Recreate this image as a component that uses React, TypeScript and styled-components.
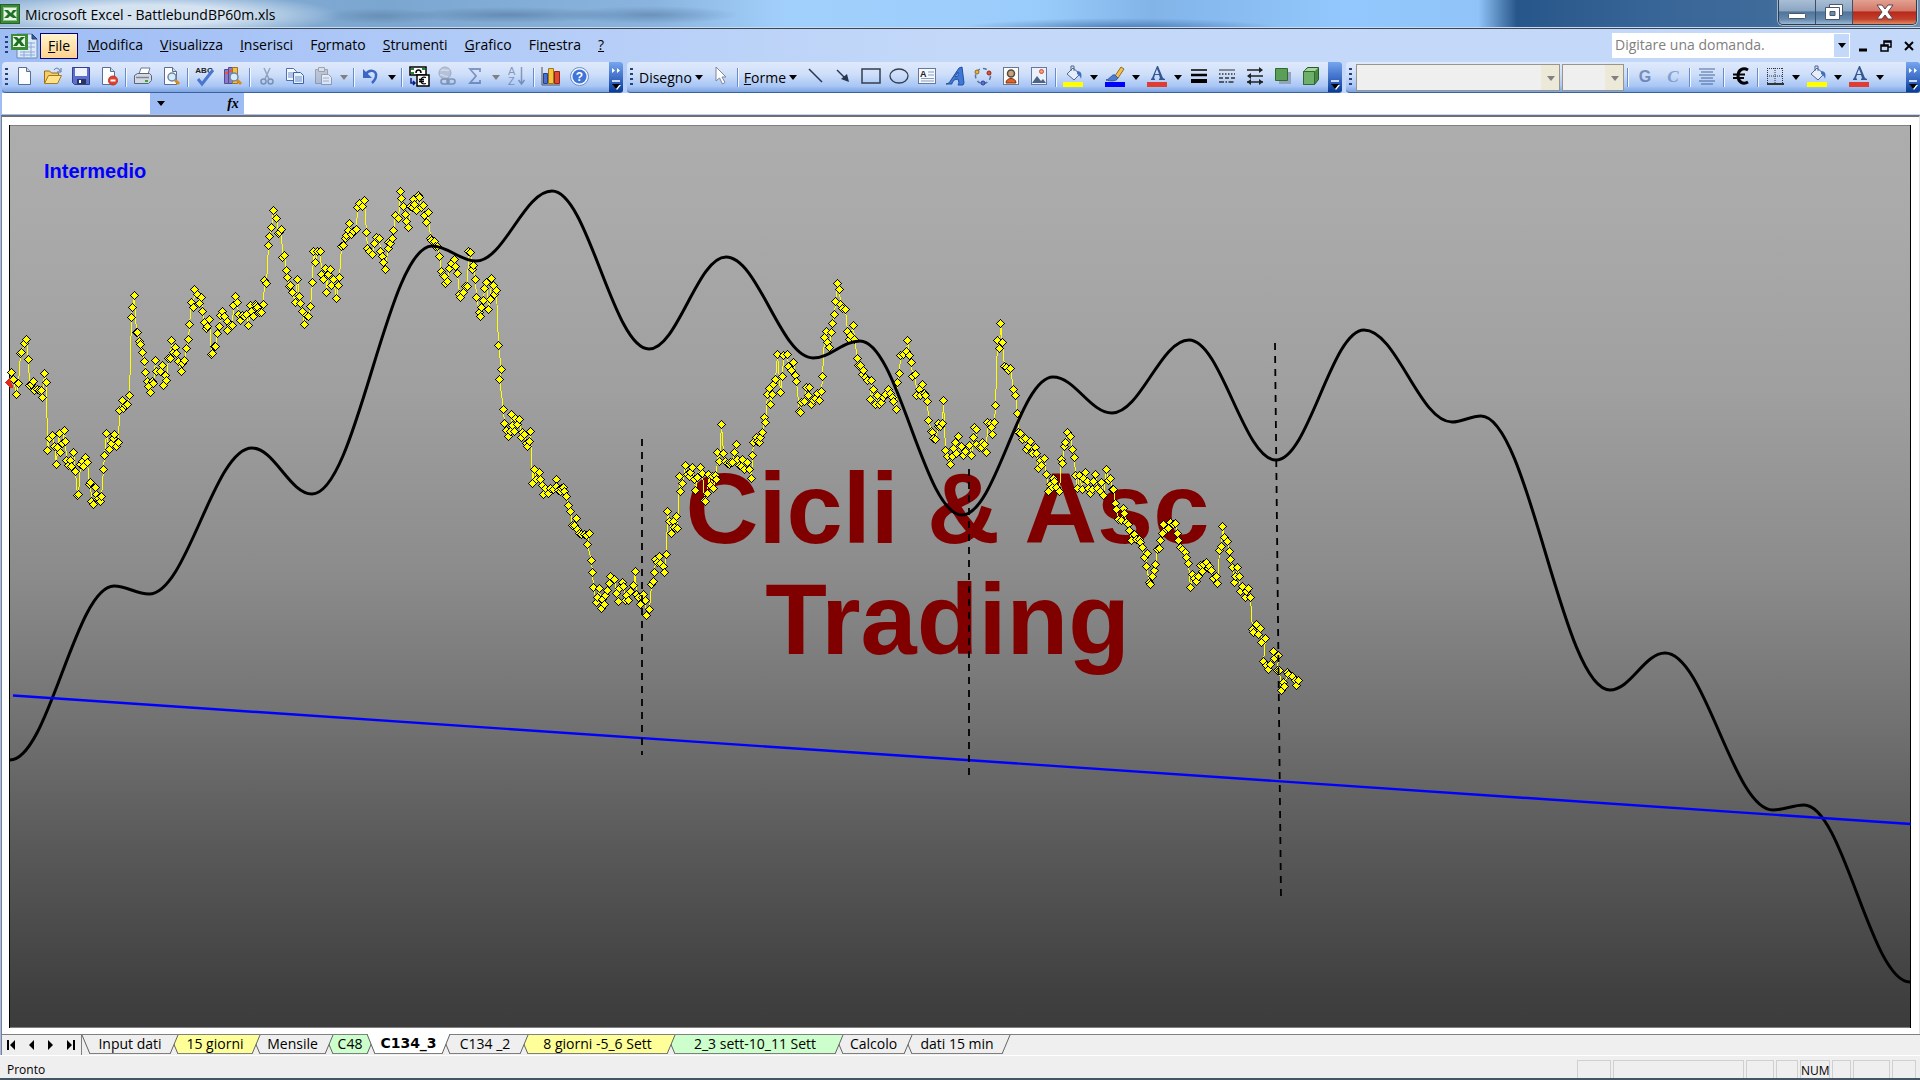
import React from "react";
import styled, { createGlobalStyle, css } from "styled-components";

const GlobalStyle = createGlobalStyle`
  *, *::before, *::after { box-sizing: border-box; }
  body { margin: 0; background: #a3c0f5; }
  button, input, select { font: inherit; color: inherit; margin: 0; padding: 0; border: 0; background: none; border-radius: 0; }
  svg { display: block; overflow: visible; }
`;

const uiFont = '"Open Sans", "Noto Sans", sans-serif';

/* ---------- window frame ---------- */

const Window = styled.div`
  display: flex;
  flex-direction: column;
  min-height: 100vh;
  font-family: ${uiFont};
  font-size: 14px;
  color: #000;
  background: linear-gradient(90deg, #9fbdf5, #c4d9f9 50%);
`;

const TitleBar = styled.header`
  display: flex;
  align-items: flex-start;
  height: 29px;
  padding-right: 3px;
  border-bottom: 1px solid #3b4654;
  box-shadow: inset 0 -1px 0 #c9dcee;
  background:
    radial-gradient(ellipse 190px 22px at 150px 15px, rgba(226, 236, 246, 0.85) 45%, rgba(226, 236, 246, 0) 100%),
    radial-gradient(ellipse 60px 8px at 380px 16px, rgba(70, 100, 130, 0.35), transparent),
    radial-gradient(ellipse 110px 8px at 510px 15px, rgba(60, 90, 125, 0.4), transparent),
    radial-gradient(ellipse 90px 9px at 650px 15px, rgba(60, 95, 135, 0.4), transparent),
    radial-gradient(ellipse 160px 10px at 1120px 28px, rgba(50, 100, 160, 0.7), transparent),
    linear-gradient(90deg, #8fb2d6 0, #7ba6d0 20%, #8ab4de 34%, #a2d0fc 41%, #9accfb 54%, #82b4e8 60%, #92c8fd 70%, #90c4f8 77%, #27568a 79%, #386597 86%, #3f6b9b 92%, #6f8fb0 100%);
`;

const Title = styled.h1`
  display: flex;
  align-items: center;
  gap: 5px;
  flex: 1;
  height: 28px;
  margin: 0;
  font-size: 14px;
  font-weight: 400;
`;

const Captions = styled.div`
  display: flex;
  height: 25px;
  border: 1px solid #2c3d50;
  border-top: 0;
  border-radius: 0 0 5px 5px;
  overflow: hidden;
  box-shadow: 0 0 0 1px rgba(255, 255, 255, 0.5);
`;

const CaptionButton = styled.button<{ $close?: boolean }>`
  display: grid;
  place-items: center;
  width: ${(p) => (p.$close ? 63 : 37)}px;
  border-right: ${(p) => (p.$close ? 0 : 1)}px solid #3c4f66;
  background: ${(p) =>
    p.$close
      ? "linear-gradient(#e3a090, #d2786a 45%, #b9281a 50%, #c2402c 80%, #e08a60)"
      : "linear-gradient(#a9bed4, #8ba6c3 45%, #50749b 50%, #6688ac 80%, #9bb8d4)"};
`;

const MenuBar = styled.nav`
  display: flex;
  align-items: center;
  gap: 1px;
  height: 33px;
  padding: 0 0 0 5px;
`;

const Grip = styled.span`
  width: 3px;
  height: 19px;
  flex: none;
  background: repeating-linear-gradient(#27417a 0 2px, transparent 2px 5px);
`;

const DocButton = styled.button`
  width: 30px;
  display: grid;
  place-items: center;
`;

const MenuItem = styled.button<{ $active?: boolean }>`
  height: 26px;
  padding: 0 8px 2px;
  ${(p) =>
    p.$active &&
    css`
      padding: 0 7px 1px;
      border: 1px solid #000080;
      background: linear-gradient(#fff4cc, #ffd28f);
    `}
`;

const Spacer = styled.span`
  flex: 1;
`;

const AskBox = styled.label`
  display: flex;
  width: 238px;
  height: 25px;
  background: #fff;
  border: 1px solid #fff;
  input {
    flex: 1;
    min-width: 0;
    padding: 0 2px 2px;
    outline: none;
  }
  input::placeholder { color: #808080; opacity: 1; }
`;

const AskArrow = styled.button`
  display: grid;
  place-items: center;
  width: 15px;
  background: #c4d9f9;
`;

const DocControls = styled.div`
  display: flex;
  button {
    display: grid;
    place-items: center;
    width: 23px;
    height: 24px;
  }
`;

/* ---------- toolbars ---------- */

const ToolbarRow = styled.div`
  display: flex;
  gap: 4px;
  height: 31px;
  padding-left: 2px;
`;

const Toolbar = styled.div<{ $basis?: number }>`
  display: flex;
  align-items: center;
  flex: ${(p) => (p.$basis ? `0 1 ${p.$basis}px` : "1 1 0")};
  min-width: 0;
  height: 31px;
  padding-left: 3px;
  overflow: hidden;
  border-bottom: 1px solid #3b619c;
  border-radius: 4px 3px 3px 4px;
  background: linear-gradient(#dfe9fb, #cfdff9 40%, #a9c6f5 80%, #7ba4e0);
  > ${Grip} { margin-right: 3px; }
`;

const Tool = styled.button<{ $dim?: boolean }>`
  display: grid;
  place-items: center;
  flex: 0 0 28px;
  height: 28px;
  padding-bottom: 2px;
  opacity: ${(p) => (p.$dim ? 0.5 : 1)};
`;

const ToolText = styled.button`
  display: flex;
  align-items: center;
  justify-content: center;
  gap: 3px;
  height: 28px;
  padding: 0 4px 0 3px;
  white-space: nowrap;
`;

const DropButton = styled.button`
  display: grid;
  place-items: center;
  flex: 0 0 14px;
  height: 28px;
`;

const Divider = styled.span`
  flex: 0 0 2px;
  height: 19px;
  margin: 0 2px;
  background: linear-gradient(90deg, #6a8ccb 50%, #f1f9ff 50%);
`;

const Overflow = styled.button`
  display: flex;
  flex-direction: column;
  align-items: center;
  justify-content: space-between;
  flex: 0 0 14px;
  height: 31px;
  margin-left: auto;
  padding: 6px 0 3px;
  background: linear-gradient(#76a6ee, #3f6fc8 50%, #053995);
`;

const ComboFrame = styled.label<{ $w: number }>`
  position: relative;
  display: flex;
  width: ${(p) => p.$w}px;
  height: 27px;
  margin: 0 1px;
  border: 1px solid #98968a;
  background: linear-gradient(90deg, #efefef calc(100% - 18px), #ece9d8 0);
  select { appearance: none; width: 100%; opacity: 1; }
  svg { position: absolute; right: 4px; top: 11px; pointer-events: none; }
`;

const FormulaRow = styled.div`
  display: flex;
  height: 22px;
  padding: 0 0 1px 2px;
  input { background: #fff; outline: none; height: 21px; }
`;

const NameBox = styled.input`
  width: 148px;
`;

const FormulaTools = styled.div`
  display: flex;
  align-items: center;
  justify-content: space-between;
  width: 94px;
  padding: 0 2px 0 4px;
  background: #9ebcf4;
`;

const FunctionButton = styled.button`
  width: 18px;
  font: italic 700 14px/18px "Liberation Serif", serif;
`;

const FormulaInput = styled.input`
  flex: 1;
`;

/* ---------- chart sheet ---------- */

const Sheet = styled.main`
  display: flex;
  flex: 1;
  padding: 8px 8px 6px 7px;
  margin-left: 1px;
  background: #fff;
  border-top: 2px solid #6f6f6f;
  border-left: 1px solid #808080;
  border-right: 1px solid #e4e4e4;
`;

const Plot = styled.section`
  display: grid;
  flex: 1;
  background: linear-gradient(#adadad, #aaa 10%, #9f9f9f 30%, #8b8b8b 50%, #727272 66%, #595959 80%, #404040 96%, #3c3c3c);
  > * { grid-area: 1 / 1; min-width: 0; min-height: 0; }
`;

const ChartTitle = styled.h2`
  margin: 0;
  padding: 35px;
  font: 700 20px/22px "Liberation Sans", Arial, sans-serif;
  color: #0000ff;
`;

const Watermark = styled.p`
  align-self: center;
  margin: 0;
  padding: 0 25px 26px 0;
  text-align: center;
  font: 700 101px/111px "Liberation Sans", Arial, sans-serif;
  color: #800000;
`;

const Graph = styled.svg`
  width: 100%;
  height: 100%;
  overflow: visible;
`;

const turningPoints: [number, number][] = [
  [10, 760], [114, 586], [149, 594], [252, 448], [312, 494], [432, 246], [476, 261], [552, 191],
  [649, 349], [726, 257], [813, 358], [860, 341], [962, 515], [1053, 377], [1112, 413],
  [1189, 340], [1276, 460], [1364, 330], [1452, 422], [1481, 416], [1610, 690],
  [1665, 653], [1773, 810], [1804, 805], [1910, 982],
];

const cyclePath = turningPoints
  .map(([x, y], i) => {
    if (i === 0) return `M${x} ${y}`;
    const [px, py] = turningPoints[i - 1];
    const k = (x - px) * 0.37;
    return `C${px + k} ${py} ${x - k} ${y} ${x} ${y}`;
  })
  .join("");

/* Hourly closes, three blocks; each pair is in thirds of a chart unit from the block's origin. */
const blocks: { x: number; y: number; data: string }[] = [
  {
    x: 0,
    y: 180,
    data:
      "34,577 40,597 50,643 56,610 62,520 65,516 72,490 80,479 86,538 88,615 94,612 101,604 103,630 112,628 118,630 125,631 127,653 134,580 140,607 142,811 148,775 157,767 162,799 169,853 171,803 178,761 182,817 187,790 194,751 197,784 200,841 206,855 211,841 215,860 221,817 226,874 232,946 235,943 241,852 247,843 251,858 256,831 263,848 268,912 271,908 275,965 280,973 286,922 289,943 295,955 301,965 305,949 311,868 313,826 319,760 328,808 334,789 340,775 344,764 350,798 355,788 358,691 367,661 370,684 376,677 382,673 388,647 394,412 397,382 403,346 409,458 412,458 418,485 422,493 428,517 434,544 436,577 441,604 446,620 452,637 457,604 460,611 466,541 470,573 480,573 488,556 491,616 496,587 500,601 506,535 511,536 514,481 520,518 526,503 530,520 536,543 544,574 548,549 553,541 559,505 565,478 569,433 574,368 580,382 583,328 592,342 598,370 604,352 607,394 613,428 620,445 623,439 628,419 634,523 637,519 643,500 647,499 652,461 658,439 661,405 667,393 674,410 682,425 683,452 690,437 697,436 700,376 706,349 712,368 715,404 721,420 727,405 733,410 740,403 745,436 751,377 754,394 760,410 767,374 770,376 773,383 778,398 784,398 790,373 793,301 799,310 805,196 808,169 814,142 820,91 829,116 835,160 838,158 845,149 847,233 853,227 859,271 862,293 868,318 872,317 877,337 886,368 892,298 898,349 901,370 907,395 913,432 919,405 925,410 931,380 937,308 940,214 946,247 952,214 961,214 964,283 970,298 975,265 980,338 985,284 992,268 994,317 1000,298 1009,355 1015,317 1019,292 1024,199 1030,196 1036,175 1038,167 1044,150 1048,130 1054,164 1060,155 1069,149 1071,83 1078,70 1087,80 1093,61 1099,157 1102,205 1108,215 1117,223 1123,191 1128,171 1138,175 1141,214 1147,229 1150,247 1156,269 1164,187 1165,205 1171,190 1177,175 1180,151 1187,106 1195,116 1201,34 1204,55 1210,79 1216,103 1219,124 1226,143 1230,80 1237,83 1240,58 1243,74 1249,92 1255,45 1259,53 1264,83 1271,76 1274,107 1280,128 1286,97 1290,175 1295,180 1303,184 1306,200 1313,200 1318,229 1324,275 1330,287 1333,290 1337,309 1342,304 1348,265 1354,250 1363,238 1366,260 1373,280 1378,342 1382,353 1390,338 1396,320 1402,320 1405,214 1411,217 1417,268 1420,256 1426,298 1429,352 1438,397 1441,410 1444,382 1450,362 1454,325 1459,308 1465,389 1471,358 1474,295 1480,316 1483,344 1489,331",
  },
  {
    x: 480,
    y: 230,
    data:
      "55,346 64,418 58,448 70,538 73,580 79,602 84,620 90,605 94,553 98,587 103,604 107,564 112,583 118,568 124,622 128,608 134,612 140,640 142,649 148,634 151,604 157,760 163,718 169,748 178,727 182,748 187,766 190,794 197,775 205,789 211,775 219,779 229,748 230,770 235,780 241,785 244,775 251,772 252,784 259,799 265,826 271,844 277,887 283,886 289,865 292,898 298,910 305,914 313,914 319,917 328,910 322,943 334,991 337,1027 341,1072 348,1118 352,1103 358,1075 364,1134 368,1108 374,1124 377,1097 382,1081 388,1060 392,1039 403,1048 409,1090 415,1114 419,1076 428,1056 431,1069 437,1110 439,1096 445,1111 451,1084 460,1065 466,1024 469,1093 475,1103 481,1123 486,1103 490,1093 496,1111 499,1155 509,1139 514,1063 520,1054 523,1027 527,988 532,997 538,979 541,1000 550,1009 553,1027 559,973 562,844 568,874 574,911 580,874 583,892 590,859 593,895 597,740 601,784 607,761 616,706 622,733 628,740 631,727 638,713 643,748 647,782 653,743 661,712 667,730 673,810 677,815 683,791 685,733 691,767 697,740 701,775 707,737 710,748 713,667 719,694 725,583 730,670 737,694 742,700 748,702 752,697 758,698 764,667 770,643 772,689 778,707 785,709 788,688 793,718 802,698 808,719 814,745 818,676 821,637 828,622 832,634 838,637 841,622 847,607 853,562 856,577 862,493 868,475 871,523 877,493 880,463 886,449 892,374 901,487 907,439 911,376 922,373 926,409 934,421 941,397 946,436 950,454 958,544 961,547 965,516 973,515 979,472 988,472 985,496 994,524 1000,511 1006,505 1012,490 1018,511 1024,484 1027,439 1033,322 1039,304 1043,337 1048,352 1054,307 1058,281 1063,253 1066,214 1072,160 1078,179 1081,223 1088,235 1097,238 1102,304 1108,328 1111,317 1120,286 1124,327 1132,385 1135,406 1141,407 1147,433 1150,421 1156,442 1162,450 1174,451 1171,509 1180,478 1186,524 1193,495 1198,524 1204,518 1210,503 1216,493 1225,478 1231,490 1237,502 1240,514 1249,538 1253,457 1258,430 1262,376 1271,373 1280,364 1283,331 1288,377 1294,397 1297,439 1306,434 1310,497 1319,479 1322,496 1328,463 1333,490 1337,496 1343,514 1345,571 1353,605 1357,608 1360,625 1367,629 1374,590 1376,580 1382,589 1388,580 1390,511 1397,661 1402,680 1411,704 1417,679 1420,655 1427,637 1436,619 1430,671 1443,649 1451,676 1457,664 1468,646 1474,676 1480,622 1484,592",
  },
  {
    x: 940,
    y: 270,
    data:
      "110,478 109,522 118,532 125,533 127,517 134,523 139,548 143,457 152,460 155,473 158,493 164,457 166,406 172,211 178,235 181,160 187,217 193,290 200,292 205,301 211,295 220,359 227,376 232,430 235,487 241,490 247,508 256,505 259,537 265,529 271,514 277,550 287,532 289,550 295,596 301,571 304,587 313,565 319,613 326,664 331,644 337,652 340,625 344,634 350,652 358,664 364,569 367,580 373,530 377,517 382,487 392,499 398,538 404,562 406,616 411,656 418,617 428,659 430,625 437,607 442,635 446,655 451,671 457,658 461,634 467,613 473,656 481,664 485,638 491,677 499,598 505,632 511,625 517,658 520,658 526,700 530,718 536,748 543,752 550,715 553,730 559,757 565,763 568,781 575,812 583,793 589,808 598,808 601,818 608,832 613,862 622,850 619,889 627,937 631,943 638,919 644,902 647,884 652,838 658,836 661,811 667,791 671,763 679,779 685,775 692,757 701,764 706,760 712,791 715,811 722,832 728,838 736,847 739,862 746,881 752,953 757,913 763,925 769,935 775,919 781,887 788,905 790,883 799,877 805,895 808,890 814,902 820,925 829,919 832,941 838,841 844,830 848,769 854,803 863,814 869,844 872,868 877,892 883,938 886,919 893,891 899,919 901,965 907,949 916,982 920,965 925,956 932,982 937,1078 940,1088 949,1063 955,1092 962,1075 965,1117 976,1106 970,1175 980,1187 985,1199 991,1184 1000,1144 1004,1165 1015,1156 1013,1201 1019,1202 1024,1262 1031,1238 1034,1249 1043,1207 1045,1213 1057,1219 1066,1231 1070,1247 1075,1231",
  },
];

const prices = blocks.flatMap((b) =>
  b.data.split(" ").map((pair) => {
    const [x, y] = pair.split(",").map(Number);
    return [Math.floor(b.x + x / 3) + 0.5, Math.floor(b.y + y / 3) + 0.5];
  })
);

const Chart = () => (
  <Graph viewBox="9 125 1902 903" preserveAspectRatio="none" role="img" aria-label="Intermedio">
    <rect x="9.5" y="125.5" width="1901" height="902" fill="none" stroke="#808080" />
    <path d="M9.5 125V1028M1910.5 125V1028" stroke="#000" />
    <g shapeRendering="crispEdges">
      <polyline points={prices.map((p) => p.join(",")).join(" ")} fill="none" stroke="#ffff00" />
      {prices.map(([x, y], i) => (
        <path key={i} d={`M${x - 4} ${y}l4-4l4 4l-4 4z`} fill="#ffff00" stroke="#000" />
      ))}
      <path d="M4.500 382.500l5-5l4 10l-3 1z" fill="#e02a1c" />
    </g>
    <path d={cyclePath} fill="none" stroke="#000" strokeWidth="3" />
    <path d="M13 695.5L1911 824" stroke="#0000ff" strokeWidth="2.4" />
    <path d="M642 439V755M969 469V779M1275 343L1281 898" stroke="#000" strokeWidth="1.8" strokeDasharray="7 6" />
  </Graph>
);

/* ---------- sheet tabs and status ---------- */

const TabStrip = styled.div`
  display: flex;
  height: 21px;
  margin-left: 1px;
  border-top: 1px solid #808080;
  border-left: 1px solid #808080;
  background: #efefef;
`;

const TabNav = styled.div`
  display: flex;
  width: 80px;
  padding-right: 1px;
  border-right: 1px solid #808080;
  button { flex: 1; display: grid; place-items: center; }
`;

const tabColors = { plain: "#efefef", yellow: "#ffff99", green: "#ccffcc", white: "#ffffff" };

const Tab = styled.button<{ $w: number; $z: number; $active?: boolean }>`
  position: relative;
  z-index: ${(p) => p.$z};
  display: flex;
  flex: 0 0 ${(p) => p.$w}px;
  height: ${(p) => (p.$active ? 20 : 19)}px;
  margin-right: -8px;
  margin-top: ${(p) => (p.$active ? -1 : 0)}px;
  ${(p) => p.$active && css`font-family: "DejaVu Sans", sans-serif; font-weight: 700;`}
`;

const TabLabel = styled.span<{ $fill: string }>`
  flex: 1;
  height: 100%;
  line-height: 18px;
  text-align: center;
  white-space: nowrap;
  background: ${(p) => p.$fill};
  border-bottom: 1px solid #808080;
`;

const StatusBar = styled.footer`
  display: flex;
  align-items: stretch;
  gap: 2px;
  height: 25px;
  padding: 4px 4px 0 7px;
  font-size: 12px;
  background: #efefef;
  border-top: 1px solid #fff;
  border-bottom: 2px solid #445566;
`;

const StatusText = styled.span`
  flex: 1;
  line-height: 20px;
`;

const StatusCell = styled.span<{ $w: number }>`
  width: ${(p) => p.$w}px;
  border: 1px solid #d0d0d0;
  border-bottom: 0;
  text-align: center;
  line-height: 20px;
`;

/* ---------- icons ---------- */

const Caret = ({ c = "#000", w = 8 }: { c?: string; w?: number }) => (
  <svg width={w} height={w / 2 + 1} viewBox="0 0 8 5"><path d="M0 0h8L4 5z" fill={c} /></svg>
);

const Svg = ({ children, s = 20 }: { children: React.ReactNode; s?: number }) => (
  <svg width={s} height={s} viewBox="0 0 20 20" fill="none" stroke="#44546e" strokeWidth="1">{children}</svg>
);

const pageD = "M3.500 1.500h8l4 4v13h-12z";
const Page = () => (<><path d={pageD} fill="#fdfeff" stroke="#5b6e91" /><path d="M11.500 1.500v4h4" fill="#c9d8ee" stroke="#5b6e91" /></>);
const Lens = () => (<><path d="M14 14l4 4" stroke="#d98a1e" strokeWidth="3" /><circle cx="11" cy="11" r="4" fill="#d5ecfb" stroke="#6f87a6" strokeWidth="1.500" /></>);

const ExcelMark = () => (
  <svg width="20" height="20" viewBox="0 0 20 20">
    <rect x="0.500" y="0.500" width="19" height="19" fill="#3a8a3a" stroke="#2b5f2d" />
    <rect x="3.500" y="3.500" width="13" height="13" fill="#e8f5e4" stroke="#8cc488" />
    <path d="M4 6h4l3 3 2-3h4l-4 4 4 4h-4l-3-2-2 2H4l4-4z" fill="#1f7328" />
  </svg>
);

const WorkbookIcon = () => (
  <svg width="27" height="26" viewBox="0 0 27 26">
    <path d="M6 1h15l5 5v19H6z" fill="#dce9fb" stroke="#6787ba" />
    <path d="M21 1v5h5z" fill="#3c5d94" stroke="#24406e" />
    <path d="M16 10h8M16 14h8M9 19h15M9 22h15M20 9v15M13 18v6" stroke="#8ba8d4" />
    <rect x="0" y="1" width="17" height="16" fill="#3c8c36" />
    <rect x="2" y="3" width="12" height="11" fill="#e9f5e5" />
    <path d="M2 4h4l2 2 2-2h4l-4 4 4 5h-4l-2-3-2 3H2l4-5z" fill="#1e6e26" />
  </svg>
);

const icons: Record<string, React.ReactNode> = {
  new: <Svg><Page /></Svg>,
  open: <Svg><path d="M1.500 17V5h5l2 2h7v4" fill="#f3cf6b" stroke="#9a6d16" /><path d="M1.500 17.500l4-8h13l-4 8z" fill="#ffe28a" stroke="#a87a1c" /><path d="M11 4c2-3 5-2 6 1M18 2v4h-4" stroke="#54709c" /></Svg>,
  save: <Svg><path d="M1.500 1.500h17v17h-15l-2-2z" fill="#5a6fd0" stroke="#35408e" /><path d="M4 2h12v8H4z" fill="#eef3fb" stroke="none" /><path d="M6 13h9v5H6z" fill="#2b3360" stroke="none" /><path d="M8 14h2v3H8z" fill="#fff" stroke="none" /></Svg>,
  permission: <Svg><Page /><circle cx="14" cy="14.500" r="4.500" fill="#e2402c" stroke="#b83a26" /><path d="M11.500 14.500h5" stroke="#fff" strokeWidth="2" /></Svg>,
  print: <Svg><path d="M6 8l2-6h9l-2 6" fill="#fff" stroke="#6d7b92" /><path d="M1.500 9.500l3-2h12l2 2v5l-3 3h-14z" fill="#d5d9e2" stroke="#59657b" /><path d="M3 11.500h13" stroke="#7d879a" strokeWidth="1.500" /><path d="M12 14h3v2h-3z" fill="#37a53a" stroke="none" /></Svg>,
  preview: <Svg><Page /><Lens /></Svg>,
  spell: <svg width="20" height="22" viewBox="0 0 20 22"><text x="9" y="8" textAnchor="middle" fontFamily="Liberation Sans" fontSize="8" fontWeight="700" fill="#222">ABC</text><path d="M3 14l4 5L18 5" fill="none" stroke="#4a76d0" strokeWidth="3" /></svg>,
  research: <Svg><path d="M1.500 3.500h4v14h-4zM5.500 1.500h4v16h-4z" fill="#8a7cc8" stroke="#544a94" /><path d="M9.500 1.500h5v16h-5z" fill="#f0c050" stroke="#a2731a" /><path d="M2 7h3M6 5h3" stroke="#e85a3a" strokeWidth="2" /><Lens /></Svg>,
  cut: <Svg><path d="M7 2l5 11M13 2L8 13" stroke="#5b6b86" strokeWidth="1.500" /><circle cx="6.500" cy="15.500" r="2.500" strokeWidth="1.500" /><circle cx="13.500" cy="15.500" r="2.500" strokeWidth="1.500" /></Svg>,
  copy: <Svg><path d="M1.500 2.500h7l3 3v9h-10z" fill="#f4f8ff" stroke="#4f6fae" /><path d="M3 7h5M3 9h5M3 11h5" stroke="#6f8fca" /><path d="M8.500 6.500h7l3 3v8h-10z" fill="#e8f0fd" stroke="#3d62a8" /><path d="M10 11h7M10 13h7M10 15h7" stroke="#6f8fca" /></Svg>,
  paste: <Svg><path d="M2.500 3.500h12v14h-12z" fill="#a9a9b6" stroke="#666" /><path d="M5.500 1.500h6v4h-6z" fill="#ddd" stroke="#666" /><path d="M8.500 8.500h7l3 3v7h-10z" fill="#fff" stroke="#666" /><path d="M10 12h6M10 15h6" stroke="#888" /></Svg>,
  undo: <Svg><path d="M5 8c3-5 11-4 10 2-0 3-2 5-4 7" stroke="#3b66c4" strokeWidth="2.500" /><path d="M2 3v9h9z" fill="#3b66c4" stroke="none" /></Svg>,
  euroconv: <svg width="21" height="21" viewBox="0 0 21 21"><path d="M1 1h16v8H1z" fill="#fff" stroke="#000" strokeWidth="1.500" /><path d="M2 3h3M13 3h3M2 7h3" stroke="#188a2c" strokeWidth="2" fill="none" /><path d="M7 7c0-4 5-4 5 0" fill="none" stroke="#000" strokeWidth="1.500" /><path d="M8 9h12v11H8z" fill="#fff" stroke="#000" strokeWidth="1.500" /><path d="M17 11.500c-3-1-5 0-5 3s2 4 5 3M10 13.500h5M10 15.500h5" fill="none" stroke="#000" strokeWidth="1.300" /><path d="M2 12v5h3M4 15l2 2-2 2" fill="none" stroke="#0b1e8a" strokeWidth="1.500" /></svg>,
  link: <Svg><circle cx="8" cy="7" r="6" fill="#9aa3b4" stroke="#6d7890" /><path d="M4 5c3-3 6 1 8-1M3 9c4-1 5 3 8 1" stroke="#cdd4e0" strokeWidth="1.500" /><rect x="4" y="13" width="8" height="5" rx="2.500" strokeWidth="1.500" /><rect x="10" y="13" width="8" height="5" rx="2.500" strokeWidth="1.500" /></Svg>,
  sum: <Svg><path d="M15 6V3H5l6 7-6 7h10v-3" stroke="#2c4e8f" strokeWidth="1.800" /></Svg>,
  sort: <svg width="20" height="22" viewBox="0 0 20 22"><text x="1" y="10" fontFamily="Liberation Sans" fontSize="11" fill="#38527f">A</text><text x="1" y="20" fontFamily="Liberation Sans" fontSize="11" fill="#38527f">Z</text><path d="M14.500 2v16M11.500 15l3 4 3-4" fill="none" stroke="#38527f" strokeWidth="1.500" /></svg>,
  chart: <Svg><path d="M1 1v18h18" stroke="#555" /><path d="M2.500 7.500h4v10h-4z" fill="#4a70d0" stroke="#283f8c" /><path d="M7.500 2.500h5v15h-5z" fill="#f5c63c" stroke="#a3751b" /><path d="M13.500 5.500h5v12h-5z" fill="#de4a32" stroke="#8f2415" /></Svg>,
  help: <svg width="19" height="19" viewBox="0 0 19 19"><circle cx="9.500" cy="9.500" r="9" fill="#f4f8ff" stroke="#6a8ccb" /><circle cx="9.500" cy="9.500" r="7" fill="#3f74d8" /><text x="9.500" y="14" textAnchor="middle" fontFamily="Liberation Sans" fontSize="12" fontWeight="700" fill="#fff">?</text></svg>,
  pointer: <Svg><path d="M5 1v14l3.500-3 3 6 2.500-1.500-3-5.500H15z" fill="#fff" stroke="#7a879c" /></Svg>,
  line: <Svg><path d="M4 3l13 13" stroke="#27364f" strokeWidth="1.500" /></Svg>,
  arrow: <Svg><path d="M4 4l8 8" stroke="#27364f" strokeWidth="1.500" /><path d="M16 16l-2-8-6 5z" fill="#27364f" stroke="none" /></Svg>,
  rect: <svg width="20" height="16" viewBox="0 0 20 16"><rect x="1" y="1" width="18" height="14" fill="none" stroke="#333e50" strokeWidth="1.500" /></svg>,
  oval: <svg width="20" height="16" viewBox="0 0 20 16"><ellipse cx="10" cy="8" rx="9" ry="7" fill="none" stroke="#333e50" strokeWidth="1.300" /></svg>,
  textbox: <Svg><rect x="1.500" y="2.500" width="17" height="15" fill="#f4f8ff" stroke="#66799c" /><text x="3" y="11" fontFamily="Liberation Sans" fontSize="9" fontWeight="700" fill="#222" stroke="none">A</text><path d="M11 6h6M11 9h6M4 12.500h13M4 15h13" stroke="#8a9bbb" /></Svg>,
  wordart: <Svg><path d="M1 18l3-1L14 2l3-1 2 16-1 2h-5l1-2-1-4-4 1-2 3v1zM10 11l3-1V6z" fill="#3f78d8" fillRule="evenodd" stroke="#24509c" /></Svg>,
  diagram: <Svg><circle cx="10" cy="10" r="7.500" stroke="#5b74a6" strokeWidth="1.500" strokeDasharray="4 3" /><circle cx="4" cy="6" r="2" fill="#e8b83c" stroke="#8d6b1c" /><circle cx="16" cy="7" r="2" fill="#de5138" stroke="#8f2c1a" /><circle cx="10" cy="17" r="2" fill="#5a6fd8" stroke="#303f92" /></Svg>,
  clip: <Svg><rect x="2.500" y="1.500" width="15" height="17" fill="#fdfcf6" stroke="#6b7690" /><path d="M5 17c0-6 10-6 10 0z" fill="#e2622b" stroke="#7a3010" /><circle cx="10" cy="7.500" r="3.500" fill="#c9a27a" stroke="#4a4a4a" strokeWidth="1.500" /></Svg>,
  picture: <Svg><rect x="2.500" y="1.500" width="15" height="17" fill="#e8f1fc" stroke="#66799c" /><circle cx="12.500" cy="5.500" r="2" fill="#f0a080" stroke="#d9482c" /><path d="M3 17l5-7 4 5 2-2 3 4z" fill="#4d6286" stroke="none" /></Svg>,
  lines: <Svg><path d="M2 4h16" stroke="#000" strokeWidth="1.500" /><path d="M2 9h16" stroke="#000" strokeWidth="2.500" /><path d="M2 15h16" stroke="#000" strokeWidth="4" /></Svg>,
  dashes: <Svg><path d="M2 4h16" stroke="#333" /><path d="M2 8h16" stroke="#333" strokeWidth="1.500" strokeDasharray="1.500 1.500" /><path d="M2 12h16" stroke="#333" strokeWidth="1.500" strokeDasharray="4 2" /><path d="M2 16h16" stroke="#333" strokeWidth="1.500" strokeDasharray="5 1.500 1.500 1.500" /></Svg>,
  arrows: <Svg><path d="M2 4h15M3 10h15M2 16h16" stroke="#222" strokeWidth="1.500" /><path d="M14 1l4 3-4 3zM6 7l-4 3 4 3zM6 13l-4 3 4 3zM14 13l4 3-4 3z" fill="#222" stroke="none" /></Svg>,
  shadow: <Svg><path d="M6 6h12v12H6z" fill="#93a3bd" stroke="none" /><path d="M2.500 2.500h12v12h-12z" fill="#5b9e57" stroke="#2e6a32" /></Svg>,
  cube: <Svg><path d="M2.500 5.500l4-4h11v12l-4 5h-11z" fill="#468a46" stroke="#245c2a" /><path d="M2.500 5.500h11v13h-11z" fill="#6eb06a" stroke="#2e6a32" /><path d="M3 5l4-3h10l-3 3z" fill="#a5d49c" stroke="none" /></Svg>,
  bold: <svg width="20" height="20" viewBox="0 0 20 20"><text x="10" y="16" textAnchor="middle" fontFamily="Liberation Sans" fontSize="16" fontWeight="700" fill="#20437f">G</text></svg>,
  italic: <svg width="20" height="20" viewBox="0 0 20 20"><text x="10" y="16" textAnchor="middle" fontFamily="Liberation Serif" fontSize="17" fontStyle="italic" fontWeight="700" fill="#3d66a8">C</text></svg>,
  align: <Svg><path d="M2 3h16M4 6h12M2 9h16M4 12h12M2 15h16M4 18h12" stroke="#20437f" strokeWidth="1.500" /></Svg>,
  euro: <Svg><path d="M17 4c-5-3-10 0-10 6s5 9 10 6" stroke="#000" strokeWidth="3" /><path d="M2 8.500h12M2 12h11" stroke="#000" strokeWidth="1.800" /></Svg>,
  borders: <Svg><path d="M2 2.500h16M2 10h16M2.500 2v15M10 2v15M17.500 2v15" stroke="#333" strokeDasharray="1 1" /><path d="M2 18h17" stroke="#333" strokeWidth="2" /></Svg>,
};

const Swatch = ({ kind, color }: { kind: "fill" | "brush" | "font"; color: string }) => (
  <svg width="20" height="22" viewBox="0 0 20 22">
    {kind === "fill" && (<><path d="M4 9l6-6 7 6-6 6z" fill="#e6eefb" stroke="#50668e" /><path d="M8 6V1h3v5" fill="none" stroke="#50668e" /><path d="M14 6c5 0 5 4 4 8-1-3-2-4-4-5z" fill="#3f6fc0" /></>)}
    {kind === "brush" && (<><path d="M10 11l6-9 3 2-6 9z" fill="#f4c14e" stroke="#8f6a20" /><path d="M1 15c5-1 5-6 9-5l3 3c-2 4-8 3-12 2z" fill="#4e7ccd" stroke="#35589e" /></>)}
    {kind === "font" && <path d="M4 15v-1l1-1L10 1h1l5 12 2 1v1h-6v-1l1-1-1-3H8l-1 3 1 1v1zM8 9h4l-2-5z" fill="#34578f" fillRule="evenodd" />}
    <rect x="0" y="17" width="20" height="5" fill={color} />
  </svg>
);

const Btn = ({ i, label, dim }: { i: string; label: string; dim?: boolean }) => (
  <Tool type="button" aria-label={label} $dim={dim}>{icons[i]}</Tool>
);

const Drop = ({ c, label }: { c?: string; label: string }) => (
  <DropButton type="button" aria-label={label}><Caret c={c} /></DropButton>
);

const More = ({ chevrons }: { chevrons?: boolean }) => (
  <Overflow type="button" aria-label="Opzioni barra degli strumenti">
    <svg width="8" height="5" viewBox="0 0 8 5">{chevrons && <path d="M0 0l3 2.500L0 5zM5 0l3 2.500L5 5z" fill="#fff" />}</svg>
    <svg width="10" height="10" viewBox="0 0 10 10"><path d="M1 1h8" stroke="#fff" strokeWidth="1.500" /><path d="M2 5h8L6 10z" fill="#fff" /><path d="M1 4h8L5 9z" fill="#000" /></svg>
  </Overflow>
);

const menus: [string, string, string][] = [
  ["", "F", "ile"], ["", "M", "odifica"], ["", "V", "isualizza"], ["", "I", "nserisci"], ["F", "o", "rmato"],
  ["", "S", "trumenti"], ["", "G", "rafico"], ["Fi", "n", "estra"], ["", "?", ""],
];

const tabs: { name: string; w: number; color: keyof typeof tabColors; active?: boolean }[] = [
  { name: "Input dati", w: 96, color: "plain" },
  { name: "15 giorni", w: 90, color: "yellow" },
  { name: "Mensile", w: 81, color: "plain" },
  { name: "C48", w: 50, color: "green" },
  { name: "C134_3", w: 83, color: "white", active: true },
  { name: "C134 _2", w: 86, color: "plain" },
  { name: "8 giorni -5_6 Sett", w: 155, color: "yellow" },
  { name: "2_3 sett-10_11 Sett", w: 176, color: "green" },
  { name: "Calcolo", w: 77, color: "plain" },
  { name: "dati 15 min", w: 106, color: "plain" },
];

const TabEdge = ({ fill, right }: { fill: string; right?: boolean }) => (
  <svg width="8" height="100%" viewBox="0 0 8 20" preserveAspectRatio="none">
    <path d={right ? "M0 0H8L0 20z" : "M0 0H8V20z"} fill={fill} />
    <path d={right ? "M8 0L0 20" : "M0 0L8 20"} stroke="#606060" />
  </svg>
);

const navPaths: [string, string][] = [
  ["Primo foglio", "M1 1h2v10H1zM9 1v10L4 6z"],
  ["Foglio precedente", "M8 1v10L3 6z"],
  ["Foglio successivo", "M3 1v10l5-5z"],
  ["Ultimo foglio", "M2 1v10l5-5zM8 1h2v10H8z"],
];

const cells = [34, 131, 28, 22, 30, 19, 37, 24];

export default function App() {
  return (
    <Window>
      <GlobalStyle />
      <TitleBar>
        <Title><ExcelMark />Microsoft Excel - BattlebundBP60m.xls</Title>
        <Captions>
          <CaptionButton type="button" aria-label="Riduci a icona">
            <svg width="20" height="16" viewBox="0 0 20 16"><rect x="1.500" y="9.500" width="17" height="5" rx="1" fill="#fff" stroke="#4a5768" /></svg>
          </CaptionButton>
          <CaptionButton type="button" aria-label="Ripristina">
            <svg width="20" height="18" viewBox="0 0 20 18"><path d="M5.500 1.500h13v11h-13z" fill="#fff" stroke="#4a5768" /><path d="M1.500 4.500h14v12h-14z" fill="#fff" stroke="#4a5768" /><path d="M6 8.500h5v4H6z" fill="#6f8cab" stroke="#4a5768" /></svg>
          </CaptionButton>
          <CaptionButton type="button" aria-label="Chiudi" $close>
            <svg width="20" height="18" viewBox="0 0 20 18"><path d="M2 2h5l3 4 3-4h5l-5 7 5 7h-5l-3-4-3 4H2l5-7z" fill="#fff" stroke="#5a4450" /></svg>
          </CaptionButton>
        </Captions>
      </TitleBar>

      <MenuBar aria-label="Menu">
        <Grip />
        <DocButton type="button" aria-label="Cartella di lavoro"><WorkbookIcon /></DocButton>
        {menus.map(([a, k, b]) => (
          <MenuItem key={a + k + b} type="button" $active={b === "ile"}>{a}<u>{k}</u>{b}</MenuItem>
        ))}
        <Spacer />
        <AskBox>
          <input type="text" aria-label="Digitare una domanda" placeholder="Digitare una domanda." />
          <AskArrow type="button" aria-label="Domande recenti"><Caret /></AskArrow>
        </AskBox>
        <DocControls>
          <button type="button" aria-label="Riduci finestra"><svg width="10" height="12" viewBox="0 0 10 12"><path d="M1 10h8" stroke="#000" strokeWidth="3" /></svg></button>
          <button type="button" aria-label="Ripristina finestra"><svg width="12" height="12" viewBox="0 0 12 12"><path d="M4 5V1h7v6H8M4 2h7M1 5h7v6H1zM1 6h7" fill="none" stroke="#000" strokeWidth="1.500" /></svg></button>
          <button type="button" aria-label="Chiudi finestra"><svg width="12" height="12" viewBox="0 0 12 12"><path d="M2 2l8 8M10 2l-8 8" stroke="#000" strokeWidth="2" /></svg></button>
        </DocControls>
      </MenuBar>

      <ToolbarRow>
        <Toolbar $basis={621} role="toolbar" aria-label="Standard">
          <Grip />
          <Btn i="new" label="Nuovo" /><Btn i="open" label="Apri" /><Btn i="save" label="Salva" /><Btn i="permission" label="Autorizzazione" />
          <Divider />
          <Btn i="print" label="Stampa" /><Btn i="preview" label="Anteprima di stampa" />
          <Divider />
          <Btn i="spell" label="Controllo ortografia" /><Btn i="research" label="Ricerche" />
          <Divider />
          <Btn i="cut" label="Taglia" dim /><Btn i="copy" label="Copia" /><Btn i="paste" label="Incolla" dim /><Drop c="#808080" label="Opzioni incolla" />
          <Divider />
          <Btn i="undo" label="Annulla" /><Drop label="Elenco annulla" />
          <Divider />
          <Btn i="euroconv" label="Conversione euro" /><Btn i="link" label="Collegamento" dim /><Btn i="sum" label="Somma" dim /><Drop c="#808080" label="Funzioni" />
          <Btn i="sort" label="Ordina" dim />
          <Divider />
          <Btn i="chart" label="Creazione guidata grafico" /><Btn i="help" label="Guida" />
          <More chevrons />
        </Toolbar>
        <Toolbar $basis={715} role="toolbar" aria-label="Disegno">
          <Grip />
          <ToolText type="button"><span>Dise<u>g</u>no</span><Caret /></ToolText>
          <Btn i="pointer" label="Selezione oggetti" />
          <Divider />
          <ToolText type="button"><span><u>F</u>orme</span><Caret /></ToolText>
          <Btn i="line" label="Linea" /><Btn i="arrow" label="Freccia" /><Btn i="rect" label="Rettangolo" /><Btn i="oval" label="Ovale" />
          <Btn i="textbox" label="Casella di testo" /><Btn i="wordart" label="WordArt" /><Btn i="diagram" label="Diagramma" />
          <Btn i="clip" label="ClipArt" /><Btn i="picture" label="Immagine" />
          <Divider />
          <Tool type="button" aria-label="Colore riempimento"><Swatch kind="fill" color="#ffff00" /></Tool><Drop label="Colori riempimento" />
          <Tool type="button" aria-label="Colore linea"><Swatch kind="brush" color="#0000ff" /></Tool><Drop label="Colori linea" />
          <Tool type="button" aria-label="Colore carattere"><Swatch kind="font" color="#e03c31" /></Tool><Drop label="Colori carattere" />
          <Btn i="lines" label="Stile linea" /><Btn i="dashes" label="Stile tratteggio" /><Btn i="arrows" label="Stile freccia" />
          <Btn i="shadow" label="Stile ombreggiatura" /><Btn i="cube" label="Stile 3D" />
          <More />
        </Toolbar>
        <Toolbar role="toolbar" aria-label="Formattazione">
          <Grip />
          <ComboFrame $w={204}><select disabled aria-label="Tipo di carattere" /><Caret c="#808080" /></ComboFrame>
          <ComboFrame $w={62}><select disabled aria-label="Dimensione carattere" /><Caret c="#808080" /></ComboFrame>
          <Divider />
          <Btn i="bold" label="Grassetto" dim /><Btn i="italic" label="Corsivo" dim />
          <Divider />
          <Btn i="align" label="Centra" dim />
          <Divider />
          <Btn i="euro" label="Euro" />
          <Divider />
          <Btn i="borders" label="Bordi" /><Drop label="Tipi di bordo" />
          <Tool type="button" aria-label="Riempimento cella"><Swatch kind="fill" color="#ffff00" /></Tool><Drop label="Colori cella" />
          <Tool type="button" aria-label="Colore testo"><Swatch kind="font" color="#e03c31" /></Tool><Drop label="Colori testo" />
          <More chevrons />
        </Toolbar>
      </ToolbarRow>

      <FormulaRow>
        <NameBox type="text" aria-label="Casella nome" />
        <FormulaTools>
          <DropButton type="button" aria-label="Nomi"><Caret /></DropButton>
          <FunctionButton type="button" aria-label="Inserisci funzione">fx</FunctionButton>
        </FormulaTools>
        <FormulaInput type="text" aria-label="Barra della formula" />
      </FormulaRow>

      <Sheet>
        <Plot>
          <ChartTitle>Intermedio</ChartTitle>
          <Watermark>Cicli &amp; Asc<br />Trading</Watermark>
          <Chart />
        </Plot>
      </Sheet>

      <TabStrip>
        <TabNav>
          {navPaths.map(([label, d]) => (
            <button key={label} type="button" aria-label={label}><svg width="11" height="12" viewBox="0 0 11 12"><path d={d} /></svg></button>
          ))}
        </TabNav>
        {tabs.map((t, i) => (
          <Tab key={t.name} type="button" $w={t.w} $z={t.active ? 20 : 10 - i} $active={t.active}>
            <TabEdge fill={tabColors[t.color]} />
            <TabLabel $fill={tabColors[t.color]}>{t.name}</TabLabel>
            <TabEdge fill={tabColors[t.color]} right />
          </Tab>
        ))}
      </TabStrip>

      <StatusBar>
        <StatusText>Pronto</StatusText>
        {cells.map((w, i) => (
          <StatusCell key={i} $w={w}>{i === 4 ? "NUM" : ""}</StatusCell>
        ))}
      </StatusBar>
    </Window>
  );
}
